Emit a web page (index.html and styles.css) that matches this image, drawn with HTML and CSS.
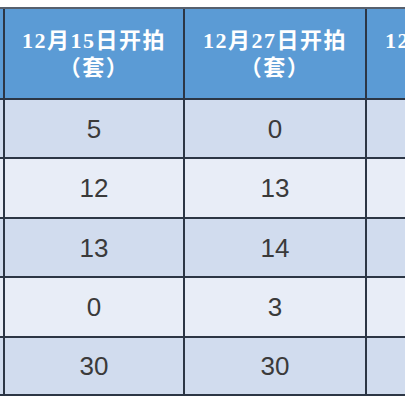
FILE: index.html
```html
<!DOCTYPE html>
<html lang="zh-CN">
<head>
<meta charset="utf-8">
<title>开拍统计</title>
<link rel="stylesheet" href="styles.css">
</head>
<body>
<div class="sheet">
  <div class="grid">
    <div class="cell head edge"></div>
    <div class="cell head"><span>12月15日开拍</span><span>（套）</span></div>
    <div class="cell head"><span>12月27日开拍</span><span>（套）</span></div>
    <div class="cell head"><span>12月31日开拍</span><span>（套）</span></div>

    <div class="cell odd edge"></div>
    <div class="cell odd num">5</div>
    <div class="cell odd num">0</div>
    <div class="cell odd num"></div>

    <div class="cell even edge"></div>
    <div class="cell even num">12</div>
    <div class="cell even num">13</div>
    <div class="cell even num"></div>

    <div class="cell odd edge"></div>
    <div class="cell odd num">13</div>
    <div class="cell odd num">14</div>
    <div class="cell odd num"></div>

    <div class="cell even edge"></div>
    <div class="cell even num">0</div>
    <div class="cell even num">3</div>
    <div class="cell even num"></div>

    <div class="cell odd edge"></div>
    <div class="cell odd num">30</div>
    <div class="cell odd num">30</div>
    <div class="cell odd num"></div>
  </div>
</div>
</body>
</html>
```

FILE: styles.css
```css
html, body {
  margin: 0;
  padding: 0;
  background: #ffffff;
}

.sheet {
  width: 405px;
  height: 405px;
  overflow: hidden;
  background: #ffffff;
}

.grid {
  display: grid;
  grid-template-columns: 5px 180px 182px 182px;
  grid-template-rows: 91px 59px 60px 59px 60px 58px;
  margin-top: 7px;
  border-top: 2px solid #56606e;
  width: max-content;
}

.cell {
  box-sizing: border-box;
  border-right: 2px solid #2c3645;
  border-bottom: 2px solid #2c3645;
  display: flex;
  flex-direction: column;
  align-items: center;
  justify-content: center;
  overflow: hidden;
  white-space: nowrap;
}

.head {
  background: #5b9bd5;
  color: #ffffff;
  font-family: "Liberation Serif", "Noto Sans CJK SC", serif;
  font-weight: bold;
  font-size: 22px;
  letter-spacing: 1.5px;
  line-height: 27px;
  padding-top: 1px;
}

.odd {
  background: #d1dcee;
}

.even {
  background: #e8edf7;
}

.num {
  font-family: "Liberation Sans", Arial, sans-serif;
  font-size: 26px;
  color: #3a3a3a;
  padding-top: 1px;
}
```
